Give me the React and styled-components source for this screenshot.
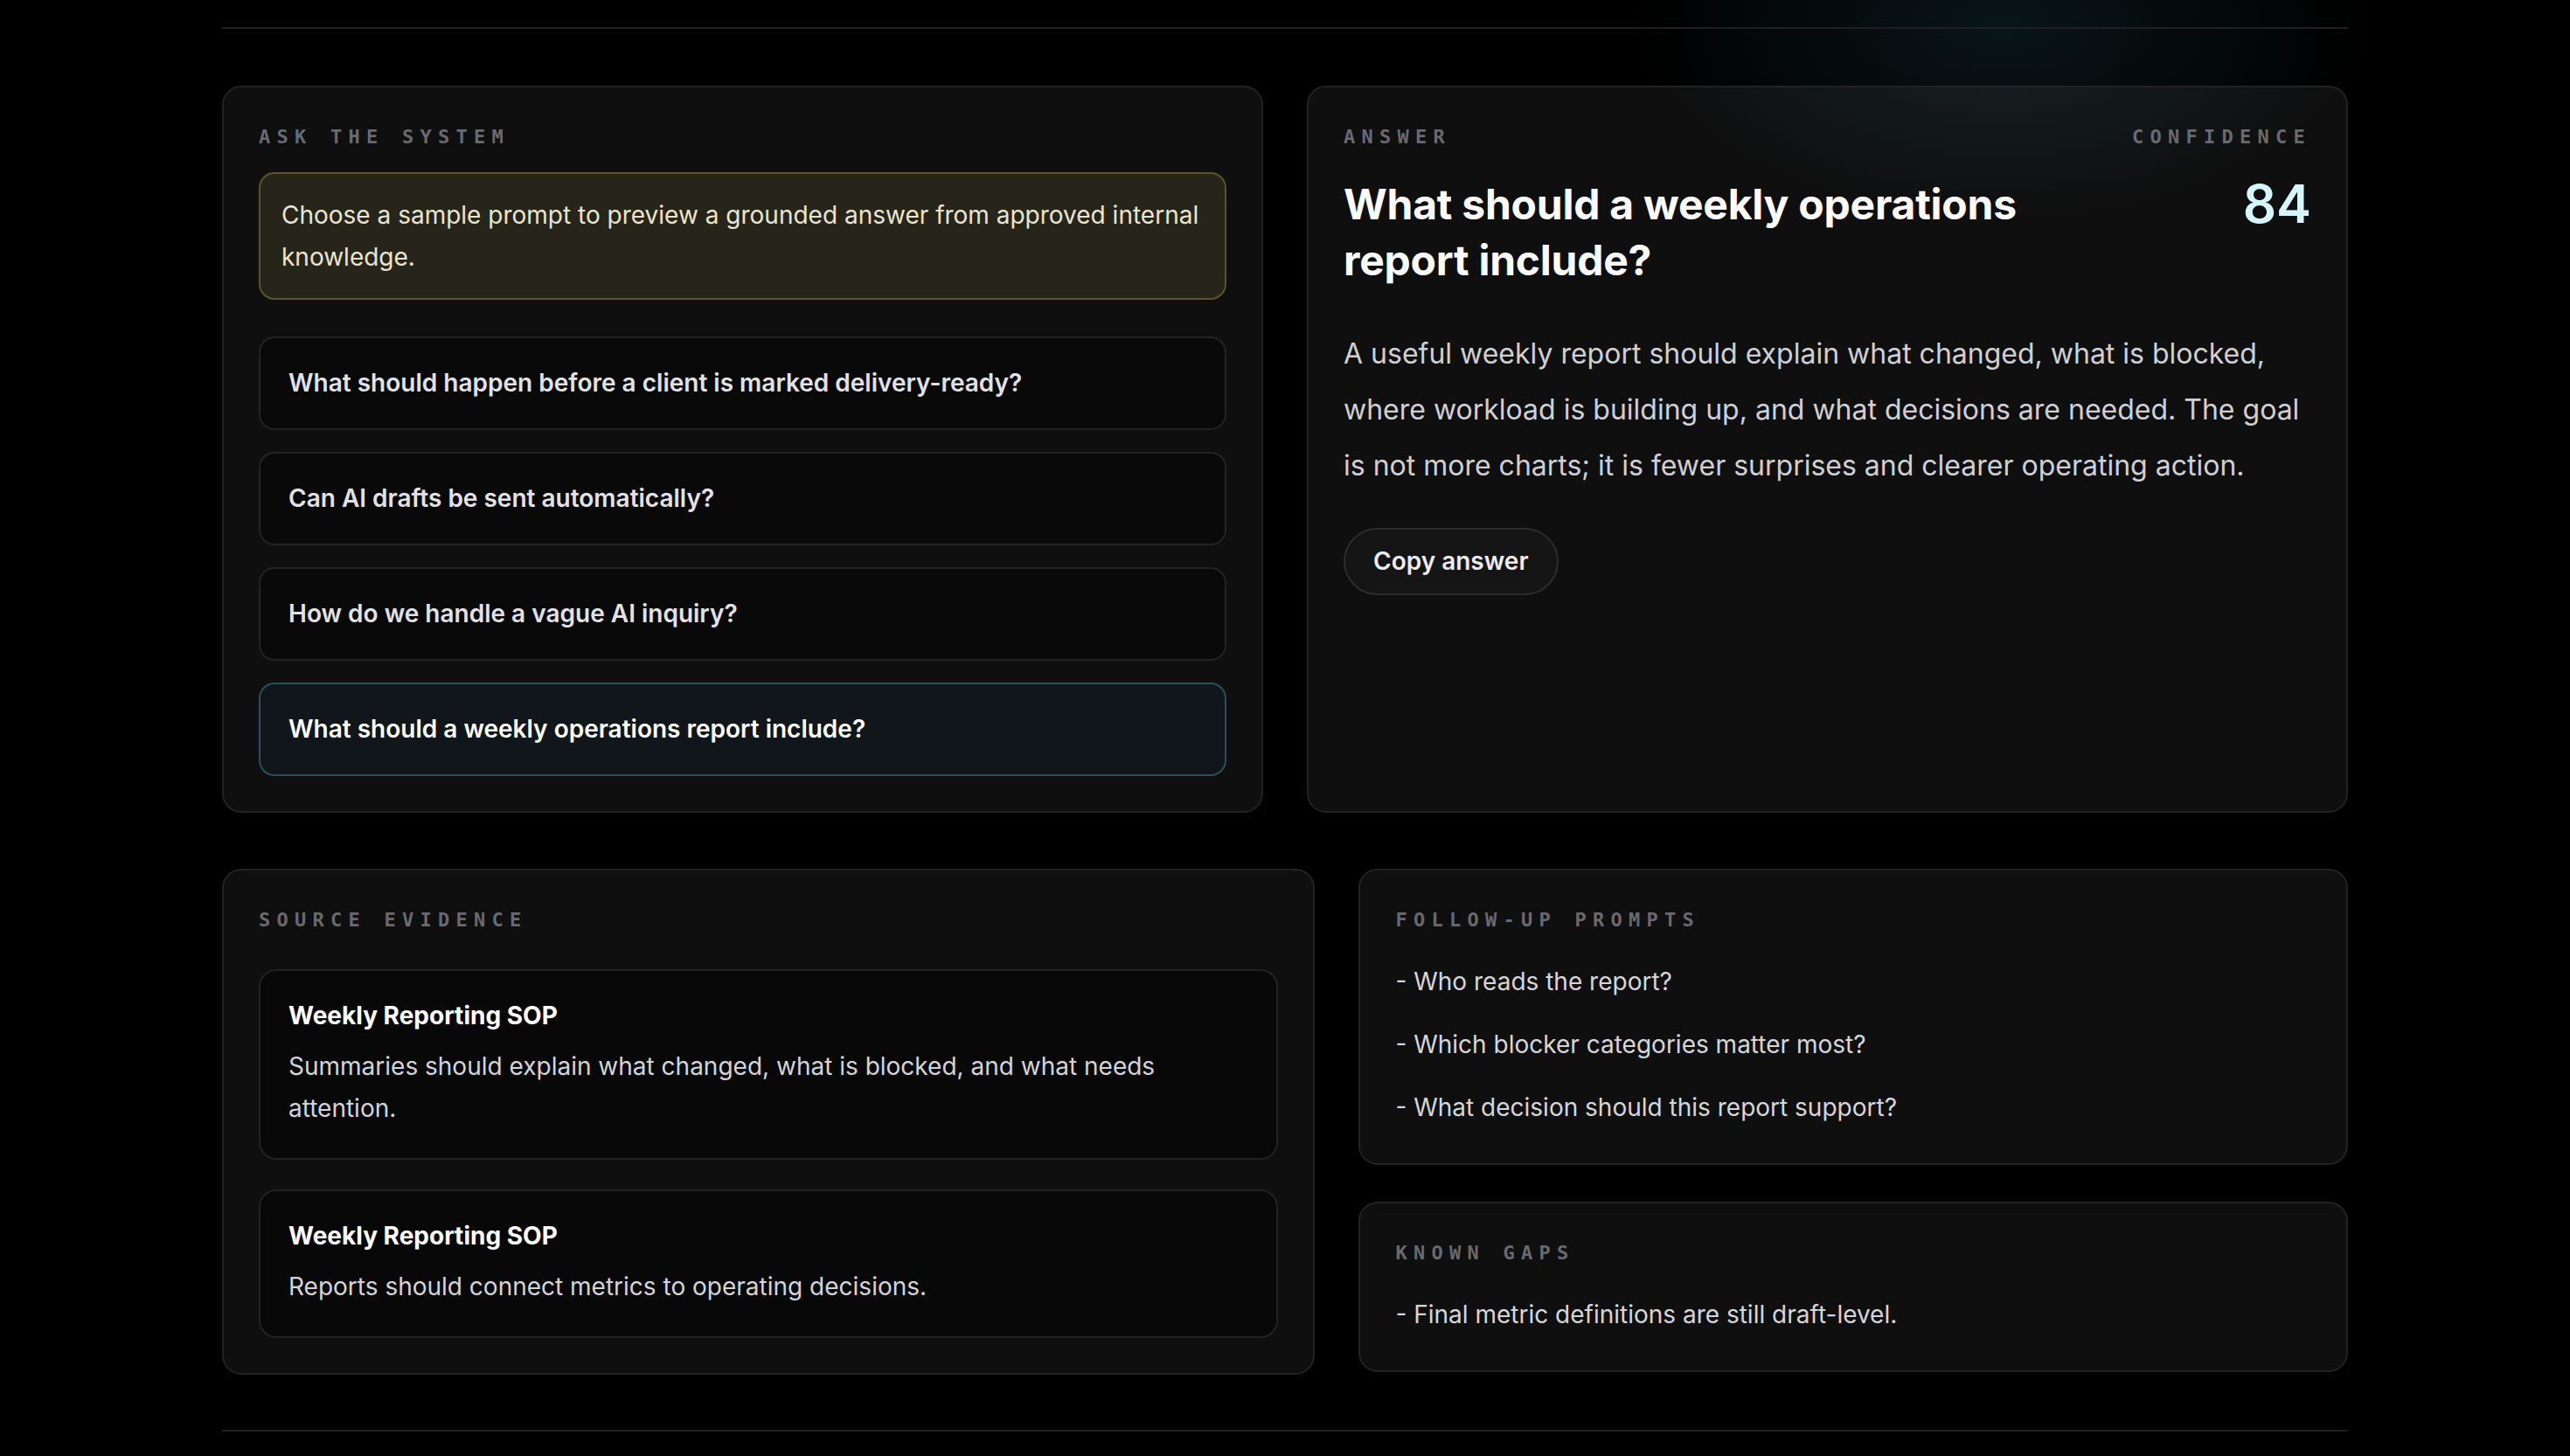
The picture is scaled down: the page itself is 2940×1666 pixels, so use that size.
import React from "react";
import styled, { createGlobalStyle } from "styled-components";

const GlobalStyle = createGlobalStyle`
  html, body {
    margin: 0;
    padding: 0;
    background-color: #000;
  }
  body {
    min-height: 100vh;
    font-family: Inter, "Noto Sans", "Liberation Sans", sans-serif;
    color: #e6e6e6;
    background:
      radial-gradient(ellipse 560px 300px at 2290px 30px, rgba(28, 62, 72, 0.34), rgba(0, 0, 0, 0) 75%),
      #000;
  }
  * {
    box-sizing: border-box;
  }
`;

const Page = styled.div`
  width: 2432px;
  margin: 0 auto;
  padding-top: 31px;
  padding-bottom: 25px;
`;

const Rule = styled.div`
  height: 2px;
  background: #1f1f21;
`;

const Main = styled.main`
  display: flex;
  flex-direction: column;
  gap: 64px;
  padding: 65px 0 63px;
`;

const Row = styled.div`
  display: grid;
  grid-template-columns: ${(p) => p.$cols || "1fr 1fr"};
  gap: 50px;
  align-items: ${(p) => p.$align || "stretch"};
`;

const Stack = styled.div`
  display: flex;
  flex-direction: column;
  gap: 42px;
`;

const Card = styled.section`
  background: rgba(255, 255, 255, 0.058);
  border: 2px solid #222224;
  border-radius: 22px;
  padding: 40px;
  display: flex;
  flex-direction: column;
`;

const Label = styled.div`
  font-family: "DejaVu Sans Mono", "Liberation Mono", monospace;
  font-size: 22px;
  font-weight: 700;
  line-height: 33px;
  letter-spacing: 0.33em;
  text-transform: uppercase;
  color: #696971;
  white-space: nowrap;
`;

/* ask the system */

const Intro = styled.div`
  margin-top: 24px;
  padding: 23px 24px;
  background: #27251a;
  border: 2px solid #5b532e;
  border-radius: 18px;
  font-size: 28px;
  line-height: 48px;
  color: #e9e5d2;
`;

const PromptList = styled.div`
  margin-top: 42px;
  display: flex;
  flex-direction: column;
  gap: 25px;
`;

const Prompt = styled.button`
  display: block;
  width: 100%;
  text-align: left;
  font-family: inherit;
  font-size: 28px;
  font-weight: 600;
  line-height: 39px;
  padding: 32px 32px;
  border-radius: 18px;
  cursor: pointer;
  color: ${(p) => (p.$active ? "#ffffff" : "#e2e2e6")};
  background: ${(p) => (p.$active ? "#101619" : "#090909")};
  border: 2px solid ${(p) => (p.$active ? "#2b4f5a" : "#232325")};
`;

/* answer */

const AnswerHead = styled.div`
  display: flex;
  justify-content: space-between;
  align-items: flex-start;
  gap: 40px;
`;

const Title = styled.h1`
  margin: 29px 0 0;
  max-width: 840px;
  font-size: 48px;
  line-height: 64px;
  font-weight: 700;
  letter-spacing: -0.005em;
  color: #fafafa;
`;

const Score = styled.div`
  display: flex;
  flex-direction: column;
  align-items: flex-end;
`;

const ScoreValue = styled.div`
  margin-top: 28px;
  font-size: 60px;
  line-height: 64px;
  font-weight: 600;
  color: #d5f6ff;
`;

const AnswerText = styled.p`
  margin: 43px 0 0;
  font-size: 32px;
  line-height: 64px;
  color: #d0d0d4;
`;

const CopyButton = styled.button`
  align-self: flex-start;
  margin-top: 39px;
  font-family: inherit;
  font-size: 28px;
  font-weight: 600;
  line-height: 39px;
  padding: 17px 32px;
  border-radius: 999px;
  background: #151515;
  border: 2px solid #2c2c2e;
  color: #ececee;
  cursor: pointer;
`;

/* evidence */

const EvidenceList = styled.div`
  margin-top: 40px;
  display: flex;
  flex-direction: column;
  gap: 34px;
`;

const Evidence = styled.article`
  padding: 33px 32px;
  background: #080808;
  border: 2px solid #222224;
  border-radius: 20px;
`;

const EvidenceTitle = styled.h3`
  margin: 0;
  font-size: 28px;
  line-height: 36px;
  font-weight: 700;
  color: #ffffff;
`;

const EvidenceText = styled.p`
  margin: 16px 0 0;
  font-size: 28px;
  line-height: 48px;
  color: #d4d4d8;
`;

/* side lists */

const Lines = styled.ul`
  list-style: none;
  margin: 30px 0 0;
  padding: 0;
  display: flex;
  flex-direction: column;
  gap: 24px;
`;

const Line = styled.li`
  font-size: 28px;
  line-height: 48px;
  color: #d6d6da;
`;

const prompts = [
  "What should happen before a client is marked delivery-ready?",
  "Can AI drafts be sent automatically?",
  "How do we handle a vague AI inquiry?",
  "What should a weekly operations report include?",
];

const evidence = [
  {
    title: "Weekly Reporting SOP",
    text: "Summaries should explain what changed, what is blocked, and what needs attention.",
  },
  {
    title: "Weekly Reporting SOP",
    text: "Reports should connect metrics to operating decisions.",
  },
];

const followUps = [
  "Who reads the report?",
  "Which blocker categories matter most?",
  "What decision should this report support?",
];

const gaps = ["Final metric definitions are still draft-level."];

export default function App() {
  const active = 3;

  return (
    <>
      <GlobalStyle />
      <Page>
        <Rule />
        <Main>
          <Row>
            <Card>
              <Label>Ask the system</Label>
              <Intro>
                Choose a sample prompt to preview a grounded answer from approved internal
                knowledge.
              </Intro>
              <PromptList>
                {prompts.map((q, i) => (
                  <Prompt key={q} $active={i === active}>
                    {q}
                  </Prompt>
                ))}
              </PromptList>
            </Card>

            <Card>
              <AnswerHead>
                <div>
                  <Label>Answer</Label>
                  <Title>{prompts[active]}</Title>
                </div>
                <Score>
                  <Label>Confidence</Label>
                  <ScoreValue>84</ScoreValue>
                </Score>
              </AnswerHead>
              <AnswerText>
                A useful weekly report should explain what changed, what is blocked, where
                workload is building up, and what decisions are needed. The goal is not more
                charts; it is fewer surprises and clearer operating action.
              </AnswerText>
              <CopyButton>Copy answer</CopyButton>
            </Card>
          </Row>

          <Row $cols="1.105fr 1fr" $align="start">
            <Card>
              <Label>Source evidence</Label>
              <EvidenceList>
                {evidence.map((e, i) => (
                  <Evidence key={i}>
                    <EvidenceTitle>{e.title}</EvidenceTitle>
                    <EvidenceText>{e.text}</EvidenceText>
                  </Evidence>
                ))}
              </EvidenceList>
            </Card>

            <Stack>
              <Card>
                <Label>Follow-up prompts</Label>
                <Lines>
                  {followUps.map((f) => (
                    <Line key={f}>- {f}</Line>
                  ))}
                </Lines>
              </Card>
              <Card>
                <Label>Known gaps</Label>
                <Lines>
                  {gaps.map((g) => (
                    <Line key={g}>- {g}</Line>
                  ))}
                </Lines>
              </Card>
            </Stack>
          </Row>
        </Main>
        <Rule />
      </Page>
    </>
  );
}
